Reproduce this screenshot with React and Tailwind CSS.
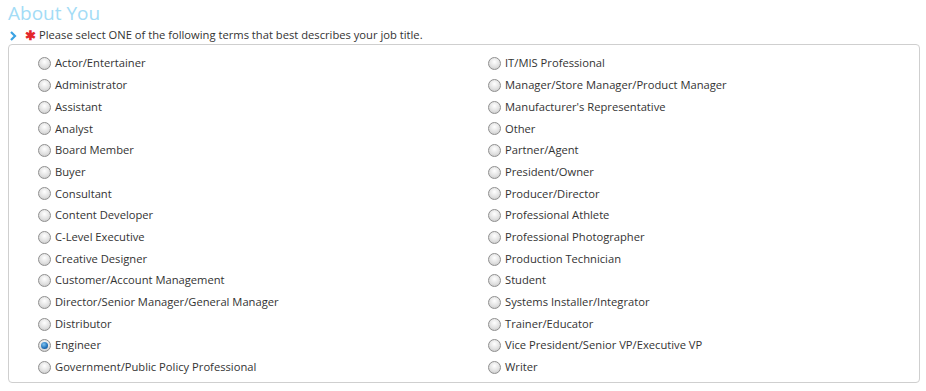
const left = [
  'Actor/Entertainer',
  'Administrator',
  'Assistant',
  'Analyst',
  'Board Member',
  'Buyer',
  'Consultant',
  'Content Developer',
  'C-Level Executive',
  'Creative Designer',
  'Customer/Account Management',
  'Director/Senior Manager/General Manager',
  'Distributor',
  'Engineer',
  'Government/Public Policy Professional',
];

const right = [
  'IT/MIS Professional',
  'Manager/Store Manager/Product Manager',
  "Manufacturer's Representative",
  'Other',
  'Partner/Agent',
  'President/Owner',
  'Producer/Director',
  'Professional Athlete',
  'Professional Photographer',
  'Production Technician',
  'Student',
  'Systems Installer/Integrator',
  'Trainer/Educator',
  'Vice President/Senior VP/Executive VP',
  'Writer',
];

const Radio = ({ checked }) => (
  <span className="relative flex h-[13px] w-[13px] shrink-0 items-center justify-center rounded-full border border-[#8f8f8f] bg-[radial-gradient(circle_at_50%_35%,#ffffff_0%,#e2e2e2_55%,#c2c2c2_100%)]">
    {checked && (
      <span className="h-[7px] w-[7px] rounded-full bg-[radial-gradient(circle_at_40%_35%,#7fc3f0_0%,#1f6fb8_60%,#0b3f78_100%)]" />
    )}
  </span>
);

const Option = ({ label, checked }) => (
  <label className="flex h-[21.7px] items-center gap-[4px] cursor-pointer">
    <Radio checked={checked} />
    <span>{label}</span>
  </label>
);

export default function App() {
  return (
    <div className="w-[926px] h-[391px] bg-white text-[#333] text-[11.2px] overflow-hidden" style={{ fontFamily: '"Open Sans", "Noto Sans", sans-serif' }}>
      <h2 className="pl-[8px] text-[19px] leading-[27px] text-[#a3dcf6]">About You</h2>
      <div className="flex items-center h-[17px] pl-[10px]">
        <svg width="7" height="10" viewBox="0 0 7 10" className="mr-[8px]">
          <path d="M1 1 L5 5 L1 9" stroke="#3aa2e3" strokeWidth="2.2" fill="none" />
        </svg>
        <span className="text-[#e3262b] text-[13px] leading-none mr-[3px] font-bold">✱</span>
        <span>Please select ONE of the following terms that best describes your job title.</span>
      </div>
      <div className="ml-[8px] w-[912px] h-[339px] rounded-[4px] border border-[#cfcfcf] pt-[8px] pl-[29px]">
        <div className="grid grid-cols-[450px_1fr]">
          <div className="flex flex-col">
            {left.map((l) => (
              <Option key={l} label={l} checked={l === 'Engineer'} />
            ))}
          </div>
          <div className="flex flex-col">
            {right.map((l) => (
              <Option key={l} label={l} />
            ))}
          </div>
        </div>
      </div>
    </div>
  );
}
